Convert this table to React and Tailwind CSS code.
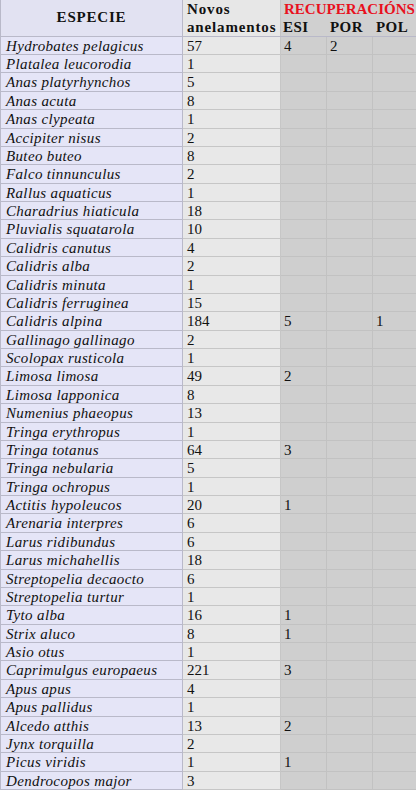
import React from 'react'

const rows = [
  ['Hydrobates pelagicus', '57', '4', '2', ''],
  ['Platalea leucorodia', '1'],
  ['Anas platyrhynchos', '5'],
  ['Anas acuta', '8'],
  ['Anas clypeata', '1'],
  ['Accipiter nisus', '2'],
  ['Buteo buteo', '8'],
  ['Falco tinnunculus', '2'],
  ['Rallus aquaticus', '1'],
  ['Charadrius hiaticula', '18'],
  ['Pluvialis squatarola', '10'],
  ['Calidris canutus', '4'],
  ['Calidris alba', '2'],
  ['Calidris minuta', '1'],
  ['Calidris ferruginea', '15'],
  ['Calidris alpina', '184', '5', '', '1'],
  ['Gallinago gallinago', '2'],
  ['Scolopax rusticola', '1'],
  ['Limosa limosa', '49', '2'],
  ['Limosa lapponica', '8'],
  ['Numenius phaeopus', '13'],
  ['Tringa erythropus', '1'],
  ['Tringa totanus', '64', '3'],
  ['Tringa nebularia', '5'],
  ['Tringa ochropus', '1'],
  ['Actitis hypoleucos', '20', '1'],
  ['Arenaria interpres', '6'],
  ['Larus ridibundus', '6'],
  ['Larus michahellis', '18'],
  ['Streptopelia decaocto', '6'],
  ['Streptopelia turtur', '1'],
  ['Tyto alba', '16', '1'],
  ['Strix aluco', '8', '1'],
  ['Asio otus', '1'],
  ['Caprimulgus europaeus', '221', '3'],
  ['Apus apus', '4'],
  ['Apus pallidus', '1'],
  ['Alcedo atthis', '13', '2'],
  ['Jynx torquilla', '2'],
  ['Picus viridis', '1', '1'],
  ['Dendrocopos major', '3'],
]

const serif = { fontFamily: '"Liberation Serif", "Times New Roman", serif' }

const Header = () => (
  <div className="flex h-[36.625px] border-b border-[#b9b9c9] font-bold text-[15px] leading-[16px] text-[#111]">
    <div className="w-[183px] shrink-0 bg-[#e2e2f2] border-l border-r border-[#b9b9c9] flex items-center justify-center pb-[1px] tracking-[0.8px]">
      ESPECIE
    </div>
    <div className="w-[98px] shrink-0 bg-[#e7e7e7] border-r border-[#c4c4c4] pl-[4px] pt-[1px] tracking-[0.85px] whitespace-nowrap">
      <div>Novos</div>
      <div className="mt-[2px]">anelamentos</div>
    </div>
    <div className="flex-1 min-w-0 bg-[#d0d0d0] pt-[1px]">
      <div className="pl-[3px] text-[#e8101e] whitespace-nowrap">RECUPERACIÓNS</div>
      <div className="flex mt-[2px] tracking-[0.4px]">
        <div className="w-[46px] shrink-0 pl-[2px]">ESI</div>
        <div className="w-[46px] shrink-0 pl-[3px]">POR</div>
        <div className="flex-1 pl-[3px]">POL</div>
      </div>
    </div>
  </div>
)

const Row = ({ name, total, esi, por, pol }) => (
  <div className="flex h-[18.375px] text-[15px] leading-[18px] text-[#111]">
    <div className="w-[183px] shrink-0 bg-[#e5e5f7] border-l border-r border-b border-[#b9b9c9] pl-[5px] italic tracking-[0.35px] whitespace-nowrap overflow-hidden">
      {name}
    </div>
    <div className="w-[98px] shrink-0 bg-[#e8e8e8] border-r border-b border-[#c6c6c6] pl-[4px]">
      {total}
    </div>
    <div className="w-[46px] shrink-0 bg-[#cfcfcf] border-r border-b border-[#c2c2c2] pl-[3px]">
      {esi}
    </div>
    <div className="w-[46px] shrink-0 bg-[#cfcfcf] border-r border-b border-[#c2c2c2] pl-[3px]">
      {por}
    </div>
    <div className="flex-1 bg-[#cfcfcf] border-b border-[#c2c2c2] pl-[3px]">
      {pol}
    </div>
  </div>
)

export default function App() {
  return (
    <div className="w-[416px] h-[790px] overflow-hidden bg-white" style={serif}>
      <Header />
      {rows.map((r) => (
        <Row
          key={r[0]}
          name={r[0]}
          total={r[1]}
          esi={r[2]}
          por={r[3]}
          pol={r[4]}
        />
      ))}
    </div>
  )
}
